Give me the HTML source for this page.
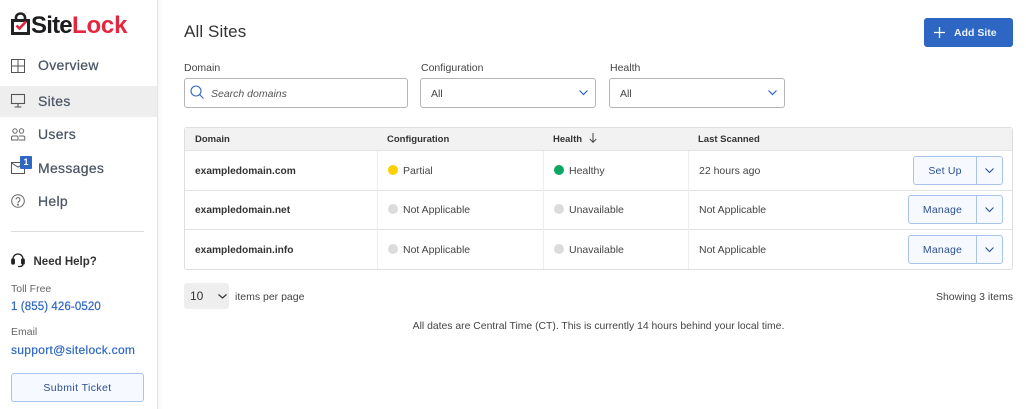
<!DOCTYPE html>
<html><head><meta charset="utf-8"><style>
html,body{margin:0;padding:0;width:1026px;height:409px;overflow:hidden;background:#fff}
body{position:relative;font-family:"Liberation Sans","Noto Sans CJK JP",sans-serif;color:#3f3f46}
.a,.t{position:absolute}
.t{white-space:nowrap;line-height:16px;height:16px}
.nav{font-size:14px;color:#4b5563;left:38px;letter-spacing:.3px;-webkit-text-stroke:.25px #4b5563}
.lab{font-size:10.5px;color:#444;top:60px}
.th{font-size:9.5px;font-weight:700;color:#333;top:132px}
.td{font-size:10.5px;color:#444}
.b{font-size:10.2px;font-weight:700;color:#333;left:195px}
.dot{position:absolute;width:10px;height:10px;border-radius:50%;background:#dcdcdc}
.box{position:absolute;box-sizing:border-box;border:1px solid #b5b5b5;border-radius:3px;background:#fff}
.btn{position:absolute;box-sizing:border-box;border:1px solid #a9c4ec;background:#f6f9ff;border-radius:3px}
.bt{text-align:center;font-size:10.5px;color:#2a4f90;letter-spacing:.2px}
.ln{position:absolute;background:#e2e2e2}
svg{position:absolute;overflow:visible}
</style></head><body>
<!-- sidebar -->
<div class="a" style="left:157px;top:0;width:1px;height:409px;background:#e4e4e4"></div>
<div class="a" style="left:158px;top:0;width:5px;height:409px;background:linear-gradient(90deg,#f7f7f7,#fff)"></div>
<div class="a" style="left:0;top:86px;width:157px;height:31px;background:#eee"></div>

<svg style="left:11px;top:12px" width="20" height="23" viewBox="0 0 20 23"><path d="M5 9V5.500a4.500 4 0 0 1 9 0V9" fill="none" stroke="#222" stroke-width="2.600"/><rect x="1.500" y="8.500" width="16" height="13" fill="none" stroke="#222" stroke-width="3"/><path d="M5.500 13.500l3 3L15 9.500" fill="none" stroke="#e0233c" stroke-width="2.600"/></svg>
<div class="t" style="left:31px;top:14px;font-size:24px;line-height:24px;height:24px;font-weight:700;color:#1d1d1f;letter-spacing:-.8px">Site</div>
<div class="t" style="left:72px;top:14px;font-size:24px;line-height:24px;height:24px;font-weight:700;color:#e5263f;letter-spacing:-.2px">Lock</div>

<svg style="left:11px;top:59px" width="15" height="14" viewBox="0 0 15 14" fill="none" stroke="#555" stroke-width="1"><rect x=".5" y=".5" width="13" height="13"/><path d="M7 .5v13M.5 7h13"/></svg>
<div class="t nav" style="top:57px">Overview</div>
<svg style="left:11px;top:94px" width="15" height="14" viewBox="0 0 15 14" fill="none" stroke="#555" stroke-width="1.100"><rect x=".5" y=".5" width="13" height="9"/><path d="M7 10v3M3.500 13h7"/></svg>
<div class="t nav" style="top:93px">Sites</div>
<svg style="left:11px;top:128px" width="15" height="13" viewBox="0 0 15 13" fill="none" stroke="#666" stroke-width="1"><circle cx="4" cy="3" r="2.200"/><circle cx="10.500" cy="3" r="2.200"/><path d="M.5 12V9.500q0-1.500 1.500-1.500h4q1 0 1 1.500V12zM8 8h4q1.800 0 1.800 1.500V12H8"/></svg>
<div class="t nav" style="top:126px">Users</div>
<svg style="left:11px;top:162px" width="15" height="12" viewBox="0 0 15 12" fill="none" stroke="#555" stroke-width="1"><rect x=".5" y=".5" width="13" height="11"/><path d="M.5 1l6.500 4 6-3"/></svg>
<div class="a" style="left:20px;top:156px;width:12px;height:13px;background:#2d66c3;border-radius:1px;color:#fff;font-size:9px;font-weight:700;text-align:center;line-height:13px">1</div>
<div class="t nav" style="top:160px">Messages</div>
<svg style="left:11px;top:194px" width="14" height="14" viewBox="0 0 14 14" fill="none" stroke="#666" stroke-width="1"><circle cx="7" cy="7" r="6.300"/><path d="M5 5.500a2 2 0 1 1 3 1.800q-1 .5-1 1.700"/><circle cx="7" cy="10.600" r=".5" fill="#666"/></svg>
<div class="t nav" style="top:193px">Help</div>
<div class="ln" style="left:11px;top:231px;width:133px;height:1px;background:#dcdcdc"></div>
<svg style="left:11px;top:253px" width="14" height="15" viewBox="0 0 14 15" fill="none" stroke="#222" stroke-width="1.300"><path d="M2 8V6a5 5 0 0 1 10 0v2"/><rect x=".8" y="6" width="2.500" height="5" rx="1" fill="#222"/><rect x="10.700" y="6" width="2.500" height="5" rx="1" fill="#222"/><path d="M12 11q0 2.500-3.500 2.500H7"/></svg>
<div class="t" style="left:33.500px;top:254px;font-size:11.500px;font-weight:700;color:#333">Need Help?</div>
<div class="t" style="left:11px;top:281px;font-size:10.500px;color:#666">Toll Free</div>
<div class="t" style="left:11px;top:299px;font-size:11.500px;color:#2d66c3;letter-spacing:.1px;-webkit-text-stroke:.2px #2d66c3">1 (855) 426-0520</div>
<div class="t" style="left:11px;top:324px;font-size:10.500px;color:#666">Email</div>
<div class="t" style="left:11px;top:342px;font-size:12px;color:#2d66c3;letter-spacing:.3px;-webkit-text-stroke:.2px #2d66c3">support@sitelock.com</div>
<div class="btn" style="left:11px;top:373px;width:133px;height:29px"></div>
<div class="t" style="left:11px;top:380px;width:133px;text-align:center;font-size:10.500px;color:#2a4f90;letter-spacing:.4px">Submit Ticket</div>

<!-- header -->
<div class="t" style="left:184px;top:22px;font-size:17px;line-height:20px;height:20px;color:#333;letter-spacing:.1px">All Sites</div>
<div class="a" style="left:924px;top:18px;width:89px;height:29px;background:#2d66c3;border-radius:3px"></div>
<svg style="left:934px;top:27px" width="11" height="11" viewBox="0 0 11 11" stroke="#fff" stroke-width="1.300"><path d="M5.500 0v11M0 5.500h11"/></svg>
<div class="t" style="left:954px;top:25px;font-size:10.500px;font-weight:700;color:#eaf1ff">Add Site</div>

<!-- filters -->
<div class="t lab" style="left:184px">Domain</div>
<div class="box" style="left:184px;top:78px;width:224px;height:30px"></div>
<svg style="left:190px;top:85px" width="15" height="15" viewBox="0 0 15 15" fill="none" stroke="#2d66c3" stroke-width="1.100"><circle cx="6" cy="6" r="5"/><path d="M9.500 9.500l4 4"/></svg>
<div class="t" style="left:211px;top:86px;font-size:10.500px;font-style:italic;color:#555">Search domains</div>
<div class="t lab" style="left:421px">Configuration</div>
<div class="box" style="left:420px;top:78px;width:176px;height:30px"></div>
<div class="t td" style="left:431px;top:86px">All</div>
<svg style="left:579px;top:90px" width="9" height="6" viewBox="0 0 9 6" fill="none" stroke="#2d66c3" stroke-width="1.200"><path d="M.5 .5l4 4 4-4"/></svg>
<div class="t lab" style="left:610px">Health</div>
<div class="box" style="left:609px;top:78px;width:176px;height:30px"></div>
<div class="t td" style="left:620px;top:86px">All</div>
<svg style="left:768px;top:90px" width="9" height="6" viewBox="0 0 9 6" fill="none" stroke="#2d66c3" stroke-width="1.200"><path d="M.5 .5l4 4 4-4"/></svg>

<!-- table -->
<div class="a" style="left:184px;top:127px;width:829px;height:143px;box-sizing:border-box;border:1px solid #dedede;border-radius:3px"></div>
<div class="a" style="left:185px;top:128px;width:827px;height:22px;background:#f2f2f2"></div>
<div class="ln" style="left:185px;top:150px;width:827px;height:1px"></div>
<div class="ln" style="left:185px;top:190px;width:827px;height:1px"></div>
<div class="ln" style="left:185px;top:229px;width:827px;height:1px"></div>
<div class="ln" style="left:377px;top:151px;width:1px;height:118px;background:#eee"></div>
<div class="ln" style="left:543px;top:151px;width:1px;height:118px;background:#eee"></div>
<div class="ln" style="left:688px;top:151px;width:1px;height:118px;background:#eee"></div>

<div class="t th" style="left:195px">Domain</div>
<div class="t th" style="left:387px">Configuration</div>
<div class="t th" style="left:553px">Health</div>
<svg style="left:589px;top:133px" width="8" height="10" viewBox="0 0 8 10" fill="none" stroke="#444"><path d="M4 0v9M.8 6l3.200 3.300L7.200 6"/></svg>
<div class="t th" style="left:698px">Last Scanned</div>

<div class="t b" style="top:164px">exampledomain.com</div>
<div class="dot" style="left:388px;top:165px;background:#fdd000"></div>
<div class="t td" style="left:403px;top:163px">Partial</div>
<div class="dot" style="left:554px;top:165px;background:#0aa763"></div>
<div class="t td" style="left:569px;top:163px">Healthy</div>
<div class="t td" style="left:699px;top:163px">22 hours ago</div>
<div class="btn" style="left:913px;top:156px;width:90px;height:29px"></div>
<div class="ln" style="left:976px;top:156px;width:1px;height:29px;background:#a9c4ec"></div>
<div class="t bt" style="left:914px;top:163px;width:62px">Set Up</div>
<svg style="left:985px;top:168px" width="9" height="6" viewBox="0 0 9 6" fill="none" stroke="#2a4f90" stroke-width="1.100"><path d="M.5 .5l4 4 4-4"/></svg>

<div class="t b" style="top:203px">exampledomain.net</div>
<div class="dot" style="left:388px;top:204px"></div>
<div class="t td" style="left:403px;top:202px">Not Applicable</div>
<div class="dot" style="left:554px;top:204px"></div>
<div class="t td" style="left:569px;top:202px">Unavailable</div>
<div class="t td" style="left:699px;top:202px">Not Applicable</div>
<div class="btn" style="left:908px;top:195px;width:95px;height:29px"></div>
<div class="ln" style="left:976px;top:195px;width:1px;height:29px;background:#a9c4ec"></div>
<div class="t bt" style="left:909px;top:202px;width:67px">Manage</div>
<svg style="left:985px;top:207px" width="9" height="6" viewBox="0 0 9 6" fill="none" stroke="#2a4f90" stroke-width="1.100"><path d="M.5 .5l4 4 4-4"/></svg>

<div class="t b" style="top:243px">exampledomain.info</div>
<div class="dot" style="left:388px;top:244px"></div>
<div class="t td" style="left:403px;top:242px">Not Applicable</div>
<div class="dot" style="left:554px;top:244px"></div>
<div class="t td" style="left:569px;top:242px">Unavailable</div>
<div class="t td" style="left:699px;top:242px">Not Applicable</div>
<div class="btn" style="left:908px;top:235px;width:95px;height:29px"></div>
<div class="ln" style="left:976px;top:235px;width:1px;height:29px;background:#a9c4ec"></div>
<div class="t bt" style="left:909px;top:242px;width:67px">Manage</div>
<svg style="left:985px;top:247px" width="9" height="6" viewBox="0 0 9 6" fill="none" stroke="#2a4f90" stroke-width="1.100"><path d="M.5 .5l4 4 4-4"/></svg>

<!-- footer -->
<div class="a" style="left:184px;top:283px;width:45px;height:26px;background:#eee;border-radius:3px"></div>
<div class="t" style="left:190px;top:288px;font-size:12px;color:#333">10</div>
<svg style="left:218px;top:294px" width="9" height="5" viewBox="0 0 9 5" fill="none" stroke="#333" stroke-width="1.200"><path d="M.5 .5l4 3.500 4-3.500"/></svg>
<div class="t td" style="left:235px;top:289px">items per page</div>
<div class="t td" style="right:13px;top:289px">Showing 3 items</div>
<div class="t td" style="left:184px;width:829px;top:319px;text-align:center;font-size:10.400px">All dates are Central Time (CT). This is currently 14 hours behind your local time.</div>
</body></html>
